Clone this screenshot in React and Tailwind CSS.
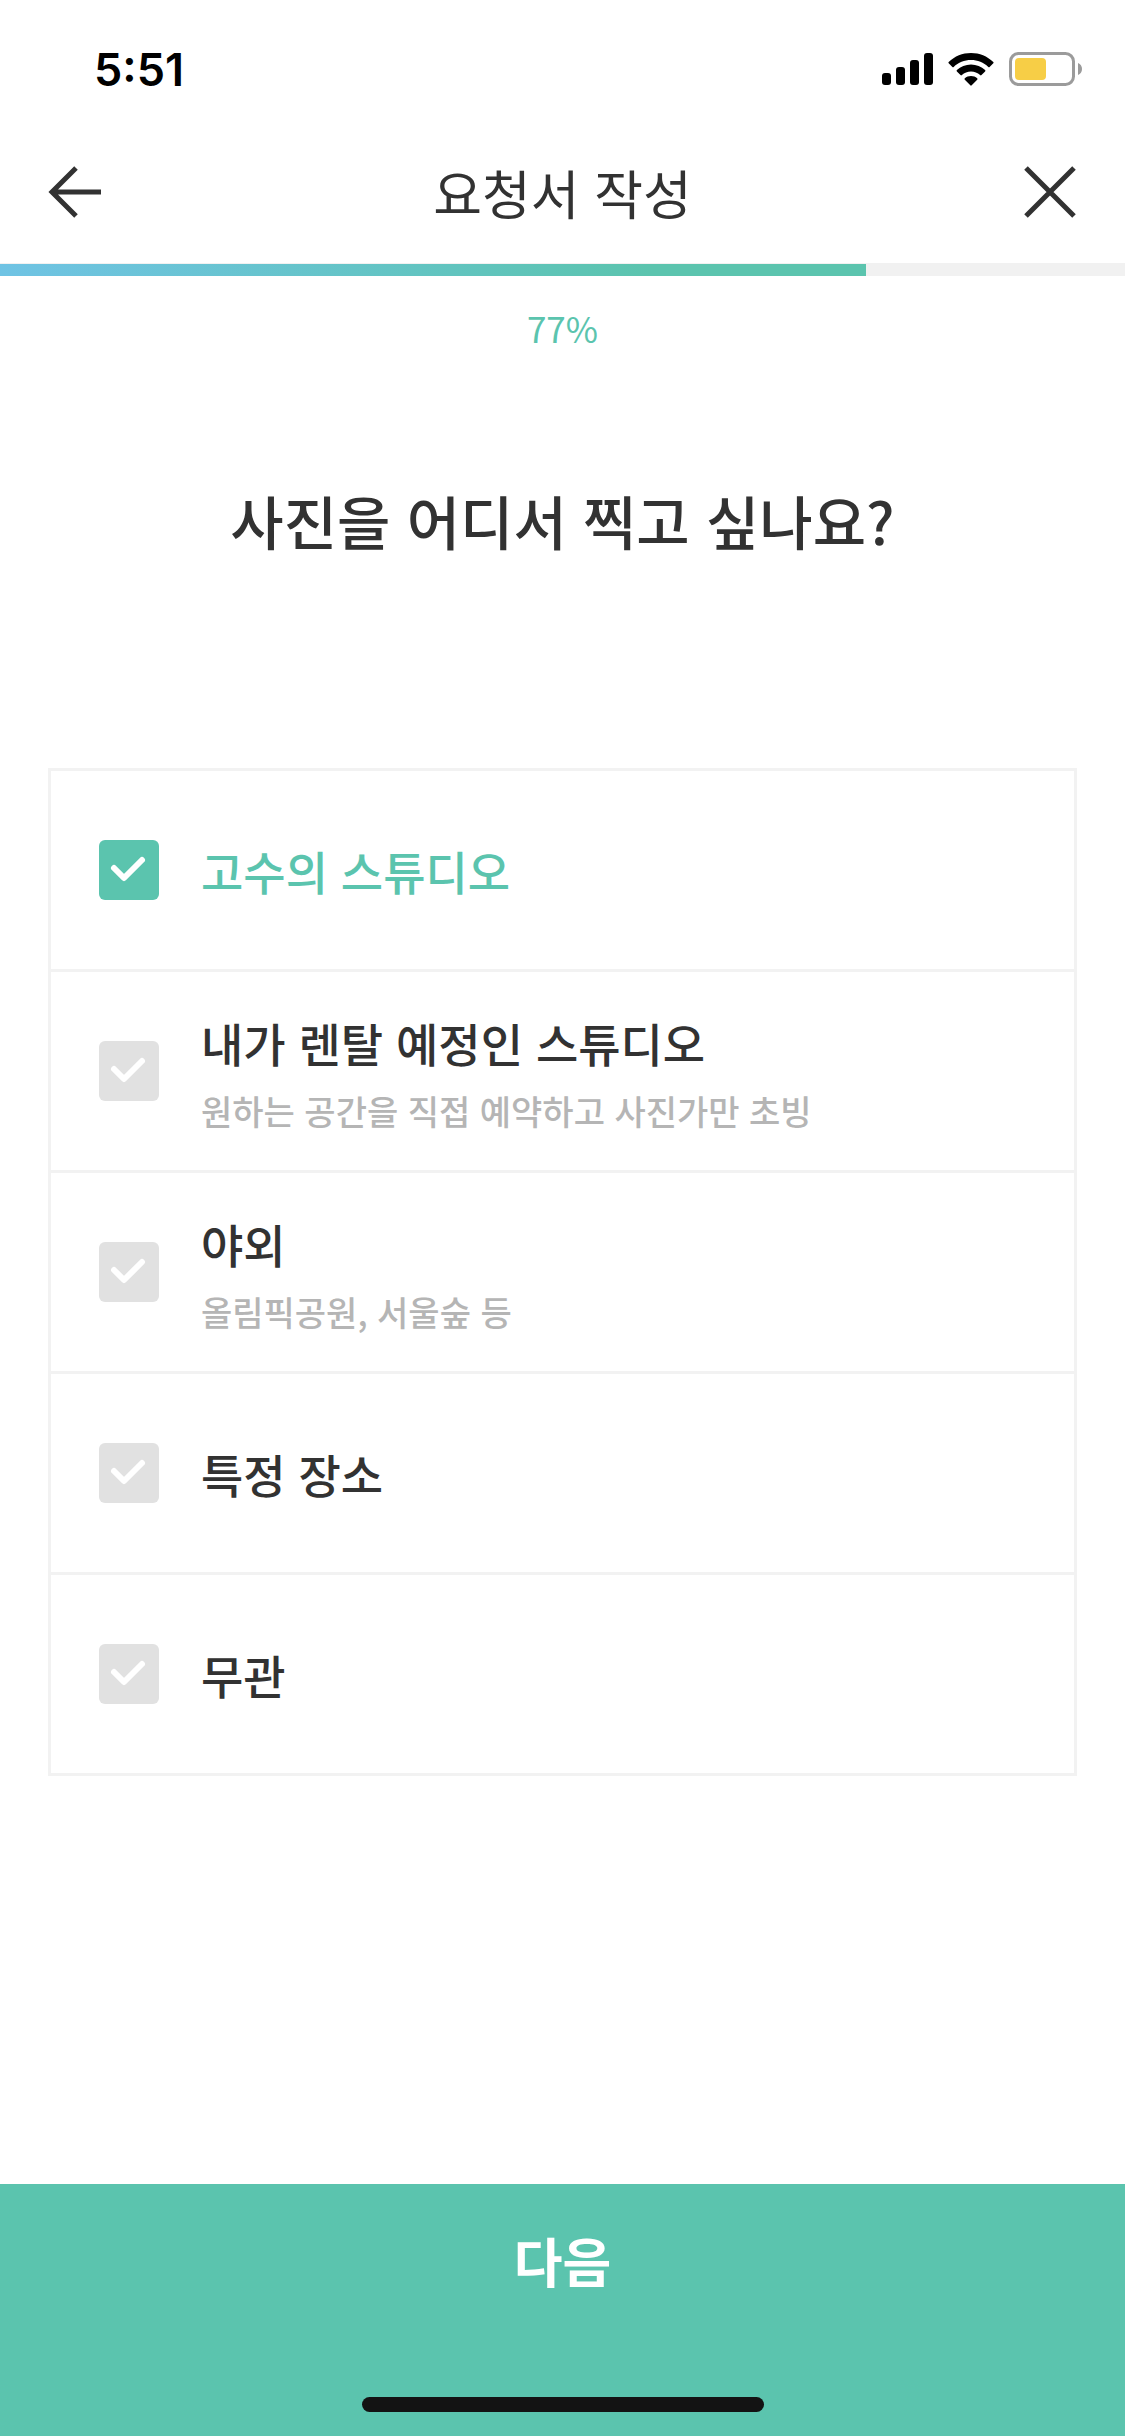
import { useState } from "react";

const PROGRESS = 77;

const OPTIONS = [
  { id: "studio", label: "고수의 스튜디오" },
  {
    id: "rental",
    label: "내가 렌탈 예정인 스튜디오",
    description: "원하는 공간을 직접 예약하고 사진가만 초빙",
  },
  { id: "outdoor", label: "야외", description: "올림픽공원, 서울숲 등" },
  { id: "place", label: "특정 장소" },
  { id: "any", label: "무관" },
];

function SignalIcon() {
  return (
    <svg viewBox="0 0 51 32" fill="currentColor" className="h-8 w-[51px]">
      <rect x="0" y="20" width="9" height="12" rx="3" />
      <rect x="14" y="14" width="9" height="18" rx="3" />
      <rect x="28" y="7" width="9" height="25" rx="3" />
      <rect x="42" y="0" width="9" height="32" rx="3" />
    </svg>
  );
}

function WifiIcon() {
  return (
    <svg viewBox="0 0 46 33" fill="currentColor" className="h-[33px] w-[46px]">
      <path d="M23 0C31.600 0 39.300 3.300 45.300 8.900Q46 9.600 45.300 10.300L41.600 13.900Q41 14.500 40.300 13.900C35.700 9.500 29.600 7 23 7S10.300 9.500 5.700 13.900Q5 14.500 4.400 13.900L.7 10.300Q0 9.600.7 8.900C6.700 3.300 14.400 0 23 0Z" />
      <path d="M23 11.500C28.400 11.500 33.400 13.600 37.100 17.100Q37.800 17.800 37.100 18.500L33.500 22.100Q32.800 22.700 32.100 22.100C29.600 19.900 26.500 18.600 23 18.600S16.400 19.900 13.900 22.100Q13.200 22.700 12.500 22.100L8.900 18.500Q8.200 17.800 8.900 17.100C12.600 13.600 17.600 11.500 23 11.500Z" />
      <path d="M23 23C25.500 23 27.500 23.900 29.200 25.300Q29.900 26 29.200 26.700L23.700 32.300Q23 33 22.300 32.300L16.800 26.700Q16.100 26 16.800 25.300C18.500 23.900 20.500 23 23 23Z" />
    </svg>
  );
}

function BatteryIcon() {
  return (
    <svg viewBox="0 0 73 34" fill="none" className="h-[34px] w-[73px]">
      <rect x="1.500" y="1.500" width="63" height="31" rx="8" stroke="#9b9b9b" strokeWidth="3" />
      <rect x="6" y="6" width="31" height="22" rx="4" fill="#f7ce46" />
      <path d="M69 11C71.500 12 73 14.300 73 17S71.500 22 69 23Z" fill="#9b9b9b" />
    </svg>
  );
}

function BackIcon() {
  return (
    <svg
      viewBox="0 0 54 54"
      fill="none"
      stroke="currentColor"
      strokeWidth="5"
      className="size-[54px]"
    >
      <path d="M28 3L4 27L28 51M5 27H53" />
    </svg>
  );
}

function CloseIcon() {
  return (
    <svg
      viewBox="0 0 54 54"
      fill="none"
      stroke="currentColor"
      strokeWidth="5"
      className="size-[54px]"
    >
      <path d="M3 3L51 51M51 3L3 51" />
    </svg>
  );
}

function CheckIcon() {
  return (
    <svg
      viewBox="0 0 60 60"
      fill="none"
      stroke="#ffffff"
      strokeWidth="6"
      strokeLinecap="round"
      strokeLinejoin="round"
      className="pointer-events-none absolute inset-0 size-full"
    >
      <path d="M15 28L25 38L43 20" />
    </svg>
  );
}

function StatusBar() {
  return (
    <div className="flex h-[132px] items-center justify-between pt-[6px] pl-[94px] pr-[43px] text-black">
      <span className="font-[Inter] text-[45px] font-semibold leading-none">
        5:51
      </span>
      <div className="flex items-center gap-[15px]">
        <SignalIcon />
        <WifiIcon />
        <BatteryIcon />
      </div>
    </div>
  );
}

function Option({ option, checked, onToggle }) {
  return (
    <li>
      <label className="flex h-[198px] cursor-pointer items-center gap-[42px] px-12">
        <span className="relative size-[60px] shrink-0">
          <input
            type="checkbox"
            checked={checked}
            onChange={onToggle}
            className="block size-full appearance-none rounded-md bg-[#e1e1e1] checked:bg-[#5bc4ae]"
          />
          <CheckIcon />
        </span>
        <span className="flex flex-col">
          <span
            className={
              checked
                ? "text-[46px] font-medium leading-[72px] text-[#5bc4ae]"
                : "text-[46px] font-medium leading-[72px]"
            }
          >
            {option.label}
          </span>
          {option.description && (
            <span className="mt-2 text-[34px] font-medium leading-[50px] text-[#b5b5b5]">
              {option.description}
            </span>
          )}
        </span>
      </label>
    </li>
  );
}

export default function App() {
  const [selected, setSelected] = useState(["studio"]);

  const toggle = (id) => {
    setSelected((prev) =>
      prev.includes(id) ? prev.filter((item) => item !== id) : [...prev, id]
    );
  };

  return (
    <div
      lang="ko"
      className="flex min-h-screen flex-col bg-white font-['Noto_Sans_CJK_KR',sans-serif] text-[#323232]"
    >
      <StatusBar />
      <header className="flex h-[131px] items-center justify-between px-12 pb-3">
        <button type="button" aria-label="뒤로">
          <BackIcon />
        </button>
        <h1 className="text-[53px] leading-[80px]">요청서 작성</h1>
        <button type="button" aria-label="닫기">
          <CloseIcon />
        </button>
      </header>
      <div className="h-[13px] bg-[#f1f1f1] pt-px">
        <div
          className="h-3 bg-linear-to-r from-[#6fc3e4] to-[#5bc4ae] to-75%"
          style={{ width: `${PROGRESS}%` }}
        />
      </div>

      <main className="flex flex-1 flex-col px-12">
        <p className="pt-[26px] text-center text-[35px] leading-[52px] text-[#5bc4ae]">
          {PROGRESS}%
        </p>
        <h2 className="pt-[122px] text-center text-[58px] font-medium leading-[88px]">
          사진을 어디서 찍고 싶나요?
        </h2>
        <ul className="mt-[204px] mb-12 divide-y-3 divide-[#f2f2f2] border-3 border-[#f2f2f2]">
          {OPTIONS.map((option) => (
            <Option
              key={option.id}
              option={option}
              checked={selected.includes(option.id)}
              onToggle={() => toggle(option.id)}
            />
          ))}
        </ul>
      </main>

      <footer className="flex flex-col items-center bg-[#5bc4ae] pb-6">
        <button
          type="button"
          className="h-[152px] w-full text-[53px] font-bold leading-[80px] text-white"
        >
          다음
        </button>
        <div className="mt-[61px] h-[15px] w-[402px] rounded-full bg-[#131313]" />
      </footer>
    </div>
  );
}
